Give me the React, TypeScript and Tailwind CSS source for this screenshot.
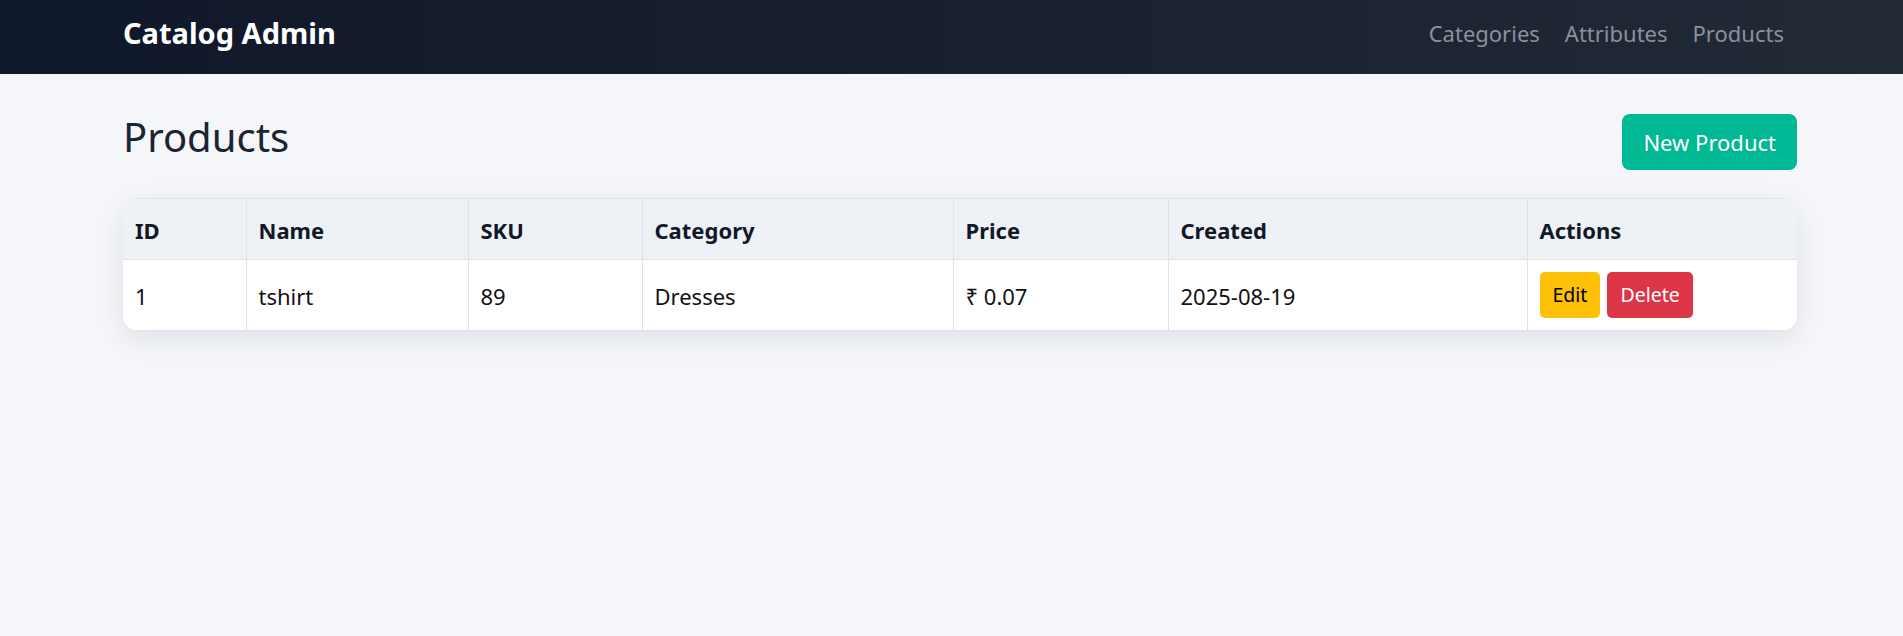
import React from 'react'

const columns = [
  { label: 'ID', width: 'w-[123px]' },
  { label: 'Name', width: 'w-[222px]' },
  { label: 'SKU', width: 'w-[174px]' },
  { label: 'Category', width: 'w-[311px]' },
  { label: 'Price', width: 'w-[215px]' },
  { label: 'Created', width: 'w-[359px]' },
  { label: 'Actions', width: '' },
]

const products = [
  { id: 1, name: 'tshirt', sku: '89', category: 'Dresses', price: '₹ 0.07', created: '2025-08-19' },
]

export default function App() {
  return (
    <div className="min-h-[636px] bg-[#f4f6f9] font-['Noto_Sans',sans-serif]">
      <header className="bg-gradient-to-r from-[#0f172a] to-[#222a36]">
        <div className="flex h-[74px] items-center pb-[8px] pl-[123px] pr-[106px]">
          <span className="text-[29px] font-bold text-white">Catalog Admin</span>
          <nav className="ml-auto flex gap-[25px] pr-[13px] text-[22px] text-[#8a919d]">
            <a href="#">Categories</a>
            <a href="#">Attributes</a>
            <a href="#">Products</a>
          </nav>
        </div>
      </header>

      <main className="pl-[123px] pr-[106px] pt-[39px]">
        <div className="flex items-center justify-between">
          <h1 className="mb-[10px] text-[40px] leading-[48px] text-[#1c2331]">Products</h1>
          <button className="h-[56px] rounded-[8px] bg-[#00b894] px-[21px] text-[22px] text-white">
            New Product
          </button>
        </div>

        <div className="mt-[27px] overflow-hidden rounded-[15px] bg-white shadow-[0_8px_28px_rgba(15,23,42,0.09)]">
          <table className="w-full table-fixed border-collapse text-[22px]">
            <thead>
              <tr className="h-[61px] border-y border-[#dfe3e8] bg-[#eef1f6]">
                {columns.map((col, index) => (
                  <th
                    key={index}
                    className={`${col.width} border-r border-[#dfe3e8] px-3 pt-[2px] text-left font-bold text-[#111827] last:border-r-0`}
                  >
                    {col.label}
                  </th>
                ))}
              </tr>
            </thead>
            <tbody>
              {products.map((p) => (
                <tr key={p.id} className="h-[71px] border-b border-[#dfe3e8] text-[#111111]">
                  <td className="border-r border-[#dfe3e8] px-3 pt-[3px]">{p.id}</td>
                  <td className="border-r border-[#dfe3e8] px-3 pt-[3px]">{p.name}</td>
                  <td className="border-r border-[#dfe3e8] px-3 pt-[3px]">{p.sku}</td>
                  <td className="border-r border-[#dfe3e8] px-3 pt-[3px]">{p.category}</td>
                  <td className="border-r border-[#dfe3e8] px-3 pt-[3px]">{p.price}</td>
                  <td className="border-r border-[#dfe3e8] px-3 pt-[3px]">{p.created}</td>
                  <td className="px-3">
                    <div className="flex gap-[7px]">
                      <button className="h-[46px] rounded-[5px] bg-[#ffc107] px-[13px] text-[19.5px] text-black">
                        Edit
                      </button>
                      <button className="h-[46px] rounded-[5px] bg-[#dc3545] px-[13px] text-[19.5px] text-white">
                        Delete
                      </button>
                    </div>
                  </td>
                </tr>
              ))}
            </tbody>
          </table>
        </div>
      </main>
    </div>
  )
}
